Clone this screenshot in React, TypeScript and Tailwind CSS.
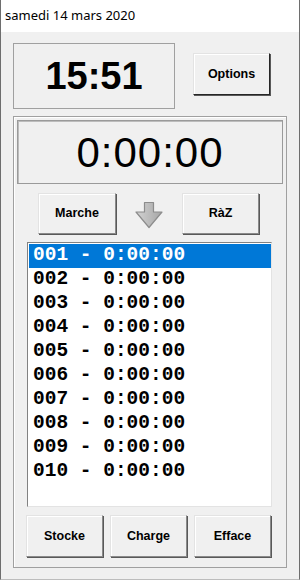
import React from "react";

const btn =
  "flex items-center justify-center bg-[#f0f0f0] border border-t-[#e3e3e3] border-l-[#e3e3e3] border-r-[#8a8a8a] border-b-[#8a8a8a] shadow-[1px_1px_0_#595959,inset_1px_1px_0_#ffffff] text-[12.5px] font-bold text-black";

function ArrowDown() {
  return (
    <svg width="30" height="28" viewBox="0 0 30 28">
      <defs>
        <linearGradient id="ag" x1="0" y1="0" x2="1" y2="0">
          <stop offset="0" stopColor="#d2d2d2" />
          <stop offset="1" stopColor="#a6a6a6" />
        </linearGradient>
      </defs>
      <path d="M10.5 1.5 H19.5 V11 H28 L15 26.5 L2 11 H10.5 Z" fill="url(#ag)" stroke="#8c8c8c" strokeWidth="1.2" strokeLinejoin="round" />
    </svg>
  );
}

export default function App() {
  const rows = Array.from({ length: 10 }, (_, i) => String(i + 1).padStart(3, "0"));

  return (
    <div className="w-[300px] h-[580px] flex flex-col border-x border-[#6e6e6e] border-b border-b-[#bdbdbd] overflow-hidden" style={{ fontFamily: "'Liberation Sans', Arial, sans-serif" }}>
      <div className="h-[32px] shrink-0 bg-white flex items-center pl-[4px] text-[13px] text-black" style={{ fontFamily: "'Noto Sans', 'Open Sans', sans-serif" }}>
        samedi 14 mars 2020
      </div>

      <div className="flex-1 bg-[#f0f0f0] pl-[12px] pt-[11px]">
        <div className="flex items-start">
          <div className="w-[162px] h-[66px] border border-[#a0a0a0] flex items-center justify-center text-[38px] font-bold text-black">
            15:51
          </div>
          <button className={`${btn} ml-[18px] mt-[10px] w-[77px] h-[42px] border-[#262626] border-r-[#262626] border-b-[#262626] border-t-[#262626] border-l-[#262626] shadow-[1px_1px_0_#262626]`}>
            Options
          </button>
        </div>

        <div className="mt-[7px] w-[274px] h-[452px] border border-[#a0a0a0] shadow-[inset_1px_1px_0_#ffffff] flex flex-col">
          <div className="mx-[3px] mt-[3px] h-[64px] border border-[#9a9a9a] shadow-[inset_1px_1px_0_#bcbcbc] flex items-center justify-center text-[42px] tracking-[1px] text-black">
            0:00:00
          </div>

          <div className="mt-[9px] flex items-center pl-[24px]">
            <button className={`${btn} w-[78px] h-[41px]`}>Marche</button>
            <div className="w-[66px] flex justify-center pt-[2px]">
              <ArrowDown />
            </div>
            <button className={`${btn} w-[77px] h-[41px]`}>RàZ</button>
          </div>

          <div className="mt-[8px] ml-[13px] w-[245px] h-[265px] bg-white border border-[#828282] border-r-[#e3e3e3] border-b-[#e3e3e3] pt-[1px] pl-px">
            {rows.map((r, i) => (
              <div
                key={r}
                className={`h-[24px] pl-[4px] flex items-center text-[19.5px] font-bold whitespace-pre ${i === 0 ? "bg-[#0078d7] text-white" : "text-black"}`}
                style={{ fontFamily: "'Liberation Mono', 'Courier New', monospace" }}
              >
                {`${r} - 0:00:00`}
              </div>
            ))}
          </div>

          <div className="mt-[8px] ml-[12px] flex gap-[7px]">
            <button className={`${btn} w-[77px] h-[42px]`}>Stocke</button>
            <button className={`${btn} w-[77px] h-[42px]`}>Charge</button>
            <button className={`${btn} w-[77px] h-[42px]`}>Efface</button>
          </div>
        </div>
      </div>
    </div>
  );
}
